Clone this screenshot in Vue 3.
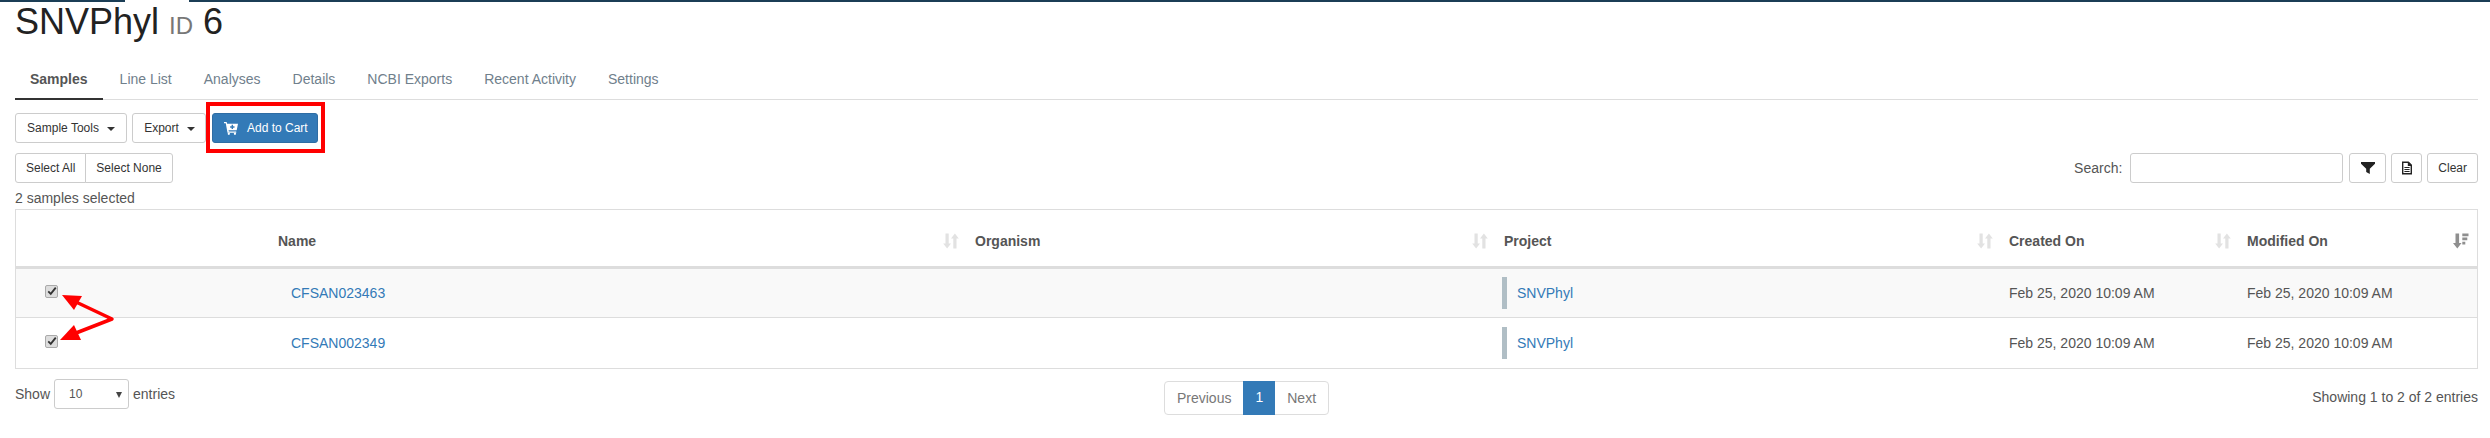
<template>
  <div class="page">
    <div class="topline"><span class="topgap"></span></div>
    <main class="content">
      <h1 class="title">SNVPhyl <small>ID</small> 6</h1>

      <ul class="tabs">
        <li v-for="(tab, i) in tabs" :key="tab" :class="{ active: i === 0 }">{{ tab }}</li>
      </ul>

      <div class="tools">
        <button class="btn tool-sample">Sample Tools<span class="caret"></span></button>
        <button class="btn tool-export">Export<span class="caret"></span></button>
        <span class="highlight">
          <button class="btn btn-primary">
            <svg class="cart" viewBox="0 0 16 16" width="14" height="14">
              <path fill="#fff" d="M0 1h3l.6 2H16l-1.5 7.500H5.200L5.500 12H14v1.500H4L2 2.500H0z" />
              <circle fill="#fff" cx="5.500" cy="14.700" r="1.300" />
              <circle fill="#fff" cx="12.500" cy="14.700" r="1.300" />
              <path fill="#337ab7" d="M8.700 4.400h1.600v1.700H12v1.500h-1.700v1.600H8.700V7.600H7V6.100h1.700z" />
            </svg>
            Add to Cart
          </button>
        </span>
      </div>

      <div class="filters">
        <div class="btn-group">
          <button class="btn">Select All</button>
          <button class="btn">Select None</button>
        </div>
        <div class="search">
          <label>Search:</label>
          <input type="text" />
          <button class="btn icon-btn wide">
            <svg viewBox="0 0 14 14" width="14" height="14"><path fill="#222" d="M0 1h14v1.800L8.800 7.800V13L5.200 11V7.800L0 2.800z" /></svg>
          </button>
          <button class="btn icon-btn">
            <svg viewBox="0 0 14 14" width="14" height="14">
              <path fill="none" stroke="#222" stroke-width="1.400" d="M2.700 1.200h5.600l3 3V12.800H2.700z" />
              <path fill="#222" d="M7.800 1h1l2.800 2.800v1.200H7.800zM4.400 6h5.200v1.100H4.400zM4.400 8h5.200v1.100H4.400zM4.400 10h5.200v1.100H4.400z" />
            </svg>
          </button>
          <button class="btn">Clear</button>
        </div>
      </div>

      <div class="selected">2 samples selected</div>

      <div class="table-wrap">
        <table>
          <thead>
            <tr>
              <th class="c-check"></th>
              <th v-for="col in columns" :key="col.name" :class="col.cls">
                <div class="th-inner">
                  {{ col.name }}
                  <svg class="sort" viewBox="0 0 16 16" width="16" height="16">
                    <template v-if="col.current">
                      <path fill="#8f8f8f" d="M2.500 .5h3.600v9.500h2.400L4.300 15.500 0 10h2.500z" />
                      <path fill="#8f8f8f" d="M9.300 .5h6.200v2.700H9.300zM9.300 4.600h5v2.700h-5zM9.300 8.700h3v2.700h-3z" />
                    </template>
                    <template v-else>
                      <path fill="#e2e2e2" d="M2.500 .5h3.200v10h2.300L4.100 15.500 .2 10.500h2.300z" />
                      <path fill="#e2e2e2" d="M10.300 15.500h3.200V5.500h2.300L11.900 .5 8 5.500h2.300z" />
                    </template>
                  </svg>
                </div>
              </th>
            </tr>
          </thead>
          <tbody>
            <tr v-for="row in rows" :key="row">
              <td class="c-check">
                <span class="check">
                  <svg viewBox="0 0 12 12" width="10" height="10"><path fill="none" stroke="#333" stroke-width="2.200" d="M1.500 6.500 4.500 9.500 10.500 2" /></svg>
                </span>
              </td>
              <td class="name-cell"><a>{{ row }}</a></td>
              <td></td>
              <td><span class="project"><a>SNVPhyl</a></span></td>
              <td>Feb 25, 2020 10:09 AM</td>
              <td>Feb 25, 2020 10:09 AM</td>
            </tr>
          </tbody>
        </table>
        <svg class="arrows" viewBox="0 0 60 50" width="60" height="50">
          <path fill="none" stroke="#f00" stroke-width="3.500" stroke-linejoin="round" d="M16 8 L52 25 L16 39" />
          <path fill="#f00" d="M2 1 L22 2 L14 16z" />
          <path fill="#f00" d="M0 46 L21 46 L14 31z" />
        </svg>
      </div>

      <div class="footer">
        <div class="length">
          Show
          <span class="select">10<i></i></span>
          entries
        </div>
        <div class="pager">
          <span>Previous</span>
          <span class="on">1</span>
          <span>Next</span>
        </div>
        <div class="info">Showing 1 to 2 of 2 entries</div>
      </div>
    </main>
  </div>
</template>

<script setup>
const tabs = ['Samples', 'Line List', 'Analyses', 'Details', 'NCBI Exports', 'Recent Activity', 'Settings']

const columns = [
  { name: 'Name', cls: 'c-name' },
  { name: 'Organism', cls: 'c-org' },
  { name: 'Project', cls: 'c-project' },
  { name: 'Created On', cls: 'c-created' },
  { name: 'Modified On', cls: 'c-modified', current: true },
]

const rows = ['CFSAN023463', 'CFSAN002349']
</script>

<style>
html, body { margin: 0; background: #fff; }
</style>

<style scoped>
.page {
  font-family: "Liberation Sans", Arial, sans-serif;
  font-size: 14px;
  line-height: 20px;
  color: #555;
  width: 2490px;
  height: 438px;
  overflow: hidden;
}

.topline {
  height: 2px;
  background: #1b3e56;
  padding-left: 125px;
}

.topgap {
  display: block;
  width: 64px;
  height: 2px;
  background: #fff;
}

.content { padding: 0 12px 0 15px; }

.title {
  margin: 0;
  font-size: 36px;
  font-weight: 400;
  line-height: 40px;
  color: #222;
  height: 49px;
}

.title small {
  font-size: 24px;
  color: #777;
}

.tabs {
  list-style: none;
  margin: 6px 0 0;
  padding: 0;
  display: flex;
  gap: 2px;
  box-sizing: border-box;
  height: 43px;
  border-bottom: 1px solid #ddd;
}

.tabs li {
  padding: 12px 15px 0;
  color: #70808c;
  height: 43px;
  box-sizing: border-box;
}

.tabs li.active {
  color: #555;
  font-weight: 700;
  border-bottom: 2px solid #333;
}

.tools {
  display: flex;
  gap: 5px;
  margin-top: 13px;
  height: 30px;
  align-items: flex-start;
}

.btn {
  font-family: inherit;
  font-size: 12px;
  line-height: 18px;
  height: 30px;
  box-sizing: border-box;
  padding: 5px 10px;
  color: #333;
  background: #fff;
  border: 1px solid #ccc;
  border-radius: 3px;
}

.tool-sample { width: 112px; }
.tool-export { width: 74px; padding-left: 11px; }

.caret {
  display: inline-block;
  margin-left: 8px;
  vertical-align: middle;
  border-top: 4px solid #333;
  border-left: 4px solid transparent;
  border-right: 4px solid transparent;
}

.highlight {
  display: flex;
  box-sizing: border-box;
  border: 4px solid #f00;
  padding: 7px 3px 6px 2px;
  margin: -11px 0 -10px -5px;
  background: #fff;
}

.btn-primary {
  width: 106px;
  color: #fff;
  background: #337ab7;
  border-color: #2e6da4;
  padding: 5px 0 5px 11px;
  display: flex;
  align-items: center;
  gap: 9px;
}

.cart { flex: none; }

.filters {
  display: flex;
  justify-content: space-between;
  margin-top: 10px;
}

.btn-group { display: flex; }
.btn-group .btn:first-child { border-radius: 3px 0 0 3px; }
.btn-group .btn:last-child { border-radius: 0 3px 3px 0; margin-left: -1px; }

.search {
  display: flex;
  align-items: center;
  gap: 5px;
}

.search label { margin-right: 3px; }

.search input {
  width: 213px;
  height: 30px;
  box-sizing: border-box;
  border: 1px solid #ccc;
  border-radius: 3px;
  margin-right: 1px;
}

.icon-btn {
  width: 31px;
  padding: 0;
  display: flex;
  align-items: center;
  justify-content: center;
}

.icon-btn.wide { width: 37px; }

.selected {
  height: 26px;
  line-height: 30px;
}

.table-wrap {
  position: relative;
  width: 2463px;
  box-sizing: border-box;
  border: 1px solid #ddd;
}

table {
  width: 100%;
  table-layout: fixed;
  border-collapse: collapse;
}

th {
  height: 57px;
  padding: 6px 8px 0 8px;
  text-align: left;
  font-weight: 700;
  color: #555;
  border-bottom: 3px solid #ddd;
  box-sizing: border-box;
}

.th-inner {
  display: flex;
  align-items: center;
  justify-content: space-between;
}

.sort { flex: none; }

td {
  height: 51px;
  padding: 0 8px;
  box-sizing: border-box;
  border-top: 1px solid #ddd;
}

tbody tr:first-child td { border-top: 0; height: 50px; }
tbody tr:first-child { background: #f9f9f9; }

.c-check { width: 254px; padding-left: 29px; }
.c-name { width: 697px; }
.c-org { width: 529px; }
.c-project { width: 505px; }
.c-created { width: 238px; }

.check {
  display: flex;
  align-items: center;
  justify-content: center;
  box-sizing: border-box;
  width: 13px;
  height: 13px;
  margin-top: -3px;
  background: #ddd;
  border: 1px solid #aaa;
  border-radius: 2px;
}

.name-cell { padding-left: 21px; }

a { color: #337ab7; }

.project {
  display: block;
  border-left: 5px solid #b0bec5;
  padding-left: 10px;
  height: 32px;
  line-height: 32px;
  margin-left: -2px;
}

.arrows {
  position: absolute;
  left: 44px;
  top: 84px;
  overflow: visible;
}

.footer {
  display: grid;
  grid-template-columns: 1fr auto 1fr;
  width: 2463px;
  margin-top: 10px;
  align-items: start;
}

.length {
  display: flex;
  align-items: center;
  gap: 4px;
  height: 30px;
}

.select {
  position: relative;
  box-sizing: border-box;
  width: 75px;
  height: 30px;
  line-height: 28px;
  font-size: 12px;
  padding-left: 14px;
  border: 1px solid #ccc;
  border-radius: 3px;
}

.select i {
  position: absolute;
  right: 6px;
  top: 12px;
  border-top: 6px solid #444;
  border-left: 3px solid transparent;
  border-right: 3px solid transparent;
}

.pager {
  display: flex;
  height: 34px;
  margin-top: 2px;
  box-sizing: border-box;
  border: 1px solid #ddd;
  border-radius: 4px;
  color: #777;
}

.pager span { padding: 6px 12px; }

.pager .on {
  background: #337ab7;
  color: #fff;
  margin: -1px 0;
}

.info {
  justify-self: end;
  line-height: 30px;
  padding-top: 3px;
}
</style>
